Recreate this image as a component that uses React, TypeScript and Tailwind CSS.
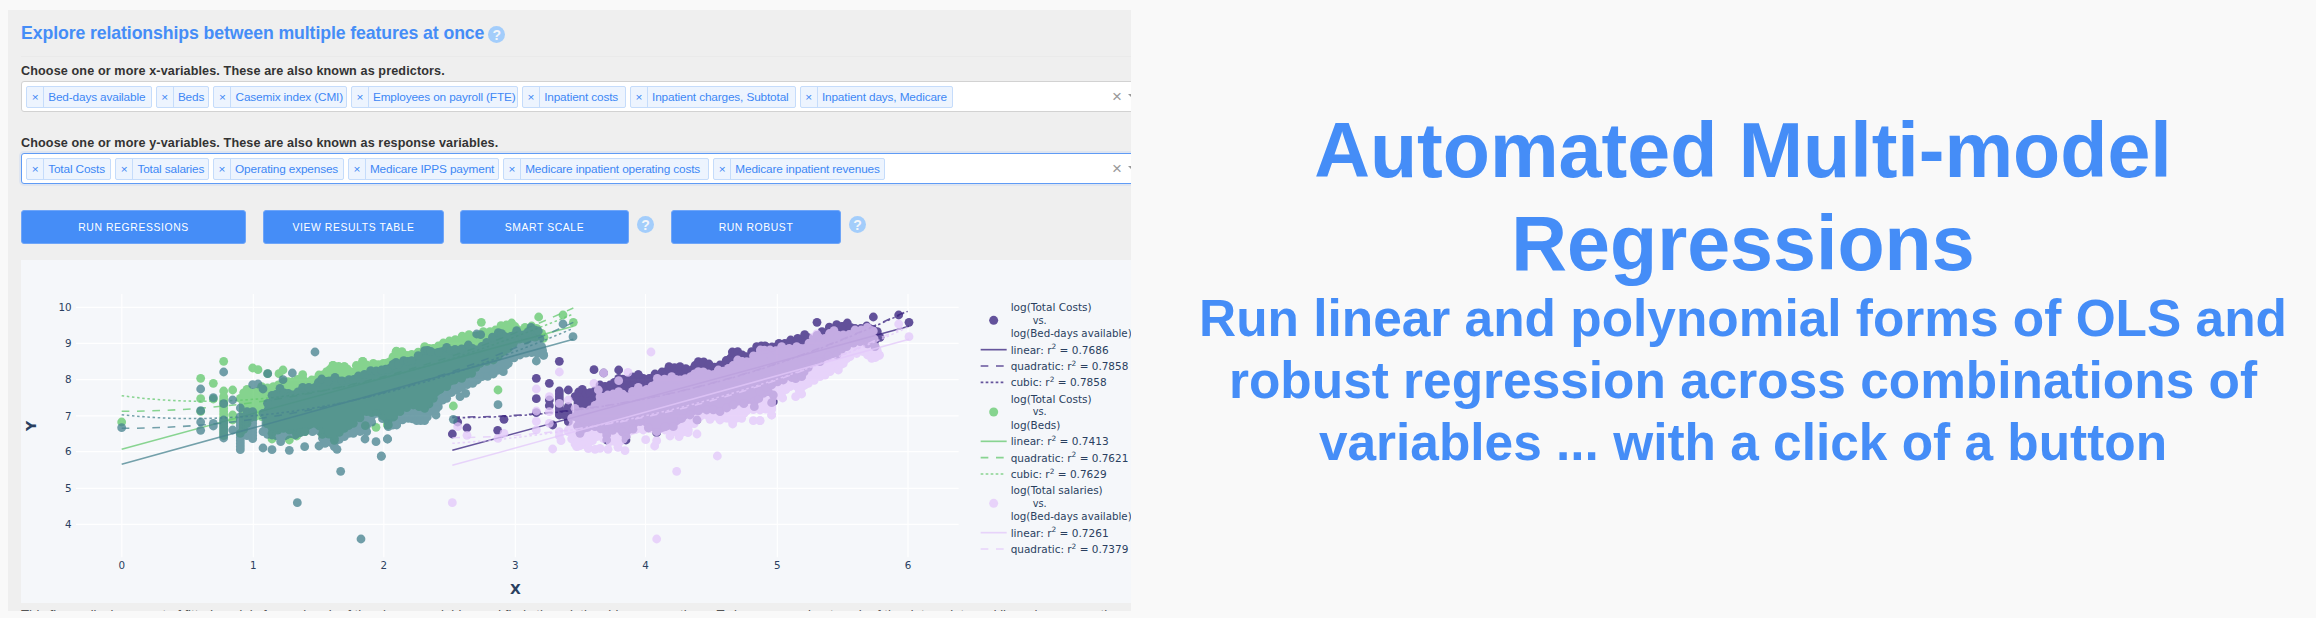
import type { ReactNode } from 'react';

type Pt = [number, number];
type Item = [string, string];

const xVars: Item[] = [
  ['Bed-days available', 'w-[125.5px]'],
  ['Beds', 'w-[53.5px]'],
  ['Casemix index (CMI)', 'w-[133.2px]'],
  ['Employees on payroll (FTE)', 'w-[167px]'],
  ['Inpatient costs', 'w-[103.7px]'],
  ['Inpatient charges, Subtotal', 'w-[165.7px]'],
  ['Inpatient days, Medicare', 'w-[153.7px]'],
];

const yVars: Item[] = [
  ['Total Costs', 'w-[85px]'],
  ['Total salaries', 'w-[93.5px]'],
  ['Operating expenses', 'w-[130.7px]'],
  ['Medicare IPPS payment', 'w-[151px]'],
  ['Medicare inpatient operating costs', 'w-[206px]'],
  ['Medicare inpatient revenues', 'w-[172px]'],
];

function parse(text: string, dx = 0): Pt[] {
  return text
    .trim()
    .split(/\s+/)
    .map((pair) => {
      const [x, y] = pair.split(',').map(Number);
      return [x + dx, y] as Pt;
    });
}

function densify(edge: Pt[], sign: number): Pt[] {
  const out: Pt[] = [];
  edge.forEach((p, i) => {
    out.push(p);
    const next = edge[i + 1];
    if (next) {
      const wobble = (((i * 37) % 13) - 3) * sign;
      out.push([(p[0] + next[0]) / 2, (p[1] + next[1]) / 2 + wobble]);
    }
  });
  return out;
}

function column(x: number, from: number, to: number): Pt[] {
  const out: Pt[] = [];
  for (let y = from; y <= to; y += 9) out.push([x, y]);
  return out;
}

const A = 1140;
const B = 2280;

const green = {
  color: '#64c96e',
  upper: [
    ...parse('721,445 741,418 758,428 785,410 820,410 850,395 878,395 908,385 935,390 957,375 980,365 999,346 1033,350 1050,365 1088,334 1100,345 1120,340 1150,340 1170,335 1188,306'),
    ...parse('50,305 66,305 95,313 134,290 160,295 190,279 226,269 267,254 310,245 330,245 363,227 395,219 415,240 455,228 470,235 485,250 492,262', A),
  ],
  lower: [
    ...parse('721,550 741,520 765,500 785,500 816,550 850,535 886,545 915,545 945,520 970,550 1003,565 1033,535 1060,520 1100,485 1130,485 1165,525'),
    ...parse('22,525 60,485 100,465 134,475 160,445 200,410 245,385 275,370 300,340 340,330 370,305 400,280 440,270 490,265', A),
  ],
  dots: [
    ...parse('365,516 602,385 602,446 602,484 640,400 640,447 671,334 671,423 698,420 698,495 698,510 758,354 774,359 803,371 837,371 849,360 908,374 1128,532 868,570 816,567 967,553 1003,571 1096,527 890,558 999,346 1033,350 1088,334'),
    ...parse('304,217 476,201 549,195 580,217 354,420 220,468 118,465', A),
    ...column(671, 440, 560),
  ],
};

const teal = {
  color: '#488490',
  upper: [
    ...parse('789,490 816,436 840,415 865,430 880,435 908,412 945,412 965,387 1005,382 1047,389 1075,378 1112,362 1145,362 1170,355 1188,337'),
    ...parse('5,360 40,345 71,332 95,332 134,302 152,304 200,292 225,298 265,285 290,300 320,277 355,248 375,260 410,242 432,255 453,232 475,243 485,290 490,315', A),
  ],
  lower: [
    ...parse('789,545 816,555 842,575 860,555 886,555 915,545 960,545 975,580 1003,590 1033,560 1060,550 1100,545 1130,490 1165,520 1190,525'),
    ...parse('25,530 50,522 85,505 110,512 134,512 150,485 175,470 200,445 230,420 245,412 278,398 306,380 340,372 370,365 385,340 420,315 455,308 490,312', A),
  ],
  dots: [
    ...parse('365,533 602,417 602,482 602,516 602,541 640,443 640,520 640,528 671,366 671,461 698,450 698,540 721,474 758,404 774,402 789,417 803,371 849,389 877,369 945,306 789,594 816,599 868,601 914,590 957,588 1011,598 1022,664 892,758 1083,867 1144,619 1163,567 1095,567 1128,575'),
    ...parse('290,252 302,254 549,222 579,260 354,464 220,508 22,567 4,618 168,458 168,478 168,495 257,430 240,440 469,333 491,316 278,400', A),
    ...column(671, 510, 566),
    ...column(721, 500, 600),
    ...column(741, 485, 564),
    ...column(758, 485, 568),
  ],
};

const purple = {
  color: '#361f7d',
  upper: [
    ...parse('585,440 607,418 630,428 660,405 690,405 716,385 740,390 775,375 790,385 825,372 867,350 900,350 935,360 955,335 987,342 1020,345 1057,306 1073,305 1100,320 1130,290 1158,290', A),
    ...parse('15,288 57,280 92,270 134,254 155,270 186,245 230,224 262,219 285,235 320,228 340,240 360,262', B),
  ],
  lower: [
    ...parse('585,500 600,550 645,530 680,555 716,535 738,560 780,515 830,548 880,530 930,495 980,480 1020,485 1060,465 1123,455 1150,430 1180,435', A),
    ...parse('0,425 35,405 70,390 120,375 145,352 180,335 230,315 260,290 300,275 345,290', B),
  ],
  dots: [
    ...parse('217,552 233,516 261,534 353,541 372,508 469,385 469,446 508,400 508,467 469,488 538,334 565,420 642,359 716,360 775,374 518,525 671,369 508,450 738,570 680,570 1123,470 1180,455 951,510', A),
    ...parse('171,217 340,201 416,195 447,217 352,245 35,458 107,386 125,380', B),
    ...column(538 + A, 423, 503),
    ...column(565 + A, 470, 515),
    ...column(551 + A, 485, 500),
  ],
};

const pink = {
  color: '#e3c8fa',
  upper: [
    ...parse('565,540 585,475 630,480 660,440 683,435 716,425 740,440 775,412 800,418 832,385 875,380 900,390 932,380 955,365 985,372 1015,360 1045,355 1073,330 1100,335 1141,300 1165,305', A),
    ...parse('30,300 65,290 110,290 134,295 160,262 195,265 222,242 250,255 285,240 322,232 340,243 345,290 358,315', B),
  ],
  lower: [
    ...parse('565,545 585,582 600,587 625,592 650,560 690,575 720,575 740,556 790,540 830,545 880,545 900,552 925,540 960,500 1020,510 1058,515 1085,505 1100,482 1140,480 1175,475', A),
    ...parse('0,465 35,450 65,438 90,410 125,412 145,400 180,380 210,365 235,360 250,340 270,320 310,305 335,325 358,316', B),
  ],
  dots: [
    ...parse('217,758 813,306 890,664 830,867 1012,618 469,417 469,483 469,514 469,540 508,440 508,485 508,520 538,366 538,460 565,450 538,545 538,558 543,572 518,597 354,565 372,550 261,556 233,530 642,400 671,369 655,420 744,367 716,392 797,569 824,588 830,572 870,558 897,560 951,552 924,548 951,510 1058,522 735,602 684,598 590,590 596,588 625,596 645,598 660,595 714,592 684,565 1120,512 1140,512 1175,495 1175,470', A),
    ...parse('0,512 35,495 35,478 35,458 68,444 107,440 125,432 118,422 416,222 447,260 170,252', B),
  ],
};

type Series = typeof green;

function Cloud({ s }: { s: Series }) {
  const up = densify(s.upper, 1);
  const low = densify(s.lower, -1);
  const outline = [...s.upper, ...s.lower.slice().reverse()].map((p) => p.join(',')).join(' ');
  return (
    <g fill={s.color} opacity={0.766}>
      <polygon points={outline} stroke={s.color} strokeWidth={8} strokeLinejoin="round" />
      {[...up, ...low, ...s.dots].map(([x, y], i) => (
        <circle key={i} cx={x} cy={y} r={13.2} />
      ))}
    </g>
  );
}

function Fits({ color, linear, quad, cubic }: { color: string; linear: string; quad: string; cubic: string }) {
  return (
    <g fill="none" stroke={color} strokeWidth={4.6} opacity={0.75}>
      <path d={linear} />
      <path d={quad} strokeDasharray="23 23" />
      <path d={cubic} strokeDasharray="7.5 8" />
    </g>
  );
}

function Label({ x, y, w, children }: { x: number; y: number; w: number; children: ReactNode }) {
  return (
    <text x={x} y={y} textLength={w} lengthAdjust="spacingAndGlyphs">
      {children}
    </text>
  );
}

const legend = [
  { color: '#361f7d', y: 183, a: 'log(Total Costs)', aw: 243, b: 'log(Bed-days available)', bw: 363, fits: ['0.7686', '0.7858', '0.7858'] },
  { color: '#64c96e', y: 458, a: 'log(Total Costs)', aw: 243, b: 'log(Beds)', bw: 149, fits: ['0.7413', '0.7621', '0.7629'] },
  { color: '#e3c8fa', y: 732, a: 'log(Total salaries)', aw: 276, b: 'log(Bed-days available)', bw: 363, fits: ['0.7261', '0.7379'] },
];

const fitNames = ['linear', 'quadratic', 'cubic'];
const fitWidths = [294, 353, 288];
const fitDashes = [undefined, '23 23', '8 7'];

function Chart() {
  const xs = [365.5, 760, 1151.5, 1546, 1936.5, 2332, 2724];
  const ys = [172, 280, 389, 497.5, 605, 715, 823];
  return (
    <svg
      className="block h-[343px] w-[1110px] shrink-0 bg-[#f5f7fa]"
      viewBox="63 30 3330 1029"
      fontFamily='"DejaVu Sans", Verdana, sans-serif'
      fontSize={31}
      fill="#2a3f5f"
    >
      <g stroke="#ffffff" strokeWidth={3.4}>
        {xs.map((x) => (
          <path key={x} d={`M${x} 132V922`} />
        ))}
        {ys.map((y) => (
          <path key={y} d={`M228 ${y}H2876`} />
        ))}
      </g>
      {xs.map((x, i) => (
        <text key={x} x={x} y={957} textAnchor="middle">
          {i}
        </text>
      ))}
      {ys.map((y, i) => (
        <text key={y} x={215} y={y + 11} textAnchor="end">
          {10 - i}
        </text>
      ))}
      <text x={1546} y={1033} textAnchor="middle" fontSize={42} fontWeight={700}>
        X
      </text>
      <text transform="translate(107 528) rotate(-90)" textAnchor="middle" fontSize={42} fontWeight={700}>
        Y
      </text>

      <Cloud s={purple} />
      <Fits color="#361f7d" linear="M1357 601L2727 229" quad="M1357 501Q2040 505 2723 182" cubic="M1357 503Q2040 505 2723 184" />
      <Cloud s={green} />
      <Fits color="#64c96e" linear="M365 598L1720 229" quad="M365 484Q1042 484 1720 174" cubic="M365 437C817 500 1268 378 1720 192" />
      <Cloud s={pink} />
      <Fits color="#e3c8fa" linear="M1357 646L2727 268" quad="M1357 563Q2040 560 2723 225" cubic="M1357 580C1812 550 2268 440 2723 232" />
      <Cloud s={teal} />
      <Fits color="#488490" linear="M365 643L1720 268" quad="M365 535Q1042 535 1720 217" cubic="M365 494C817 545 1268 425 1720 235" />

      {legend.map((g) => (
        <g key={g.y}>
          <circle cx={2981} cy={g.y + 28} r={13.5} fill={g.color} opacity={0.766} />
          <Label x={3032} y={g.y} w={g.aw}>
            {g.a}
          </Label>
          <Label x={3098} y={g.y + 38} w={42}>
            vs.
          </Label>
          <Label x={3032} y={g.y + 79} w={g.bw}>
            {g.b}
          </Label>
          {g.fits.map((v, i) => (
            <g key={i}>
              <path
                d={`M2942 ${g.y + 116 + i * 49}H${i === 0 ? 3020 : 3012}`}
                stroke={g.color}
                strokeWidth={5}
                strokeDasharray={fitDashes[i]}
                opacity={0.75}
              />
              <Label x={3032} y={g.y + 128 + i * 49} w={fitWidths[i]}>
                {fitNames[i]}: r
                <tspan dy={-13} fontSize={22}>
                  2
                </tspan>
                <tspan dy={13}> = {v}</tspan>
              </Label>
            </g>
          ))}
        </g>
      ))}
    </svg>
  );
}

function Help() {
  return (
    <span className="flex h-[17px] w-[17px] shrink-0 items-center justify-center rounded-full bg-[#a3cdfb] text-[14px] leading-none font-bold text-[#f3f6fa]">
      ?
    </span>
  );
}

function Select({ items, focused }: { items: Item[]; focused?: boolean }) {
  return (
    <div
      className={
        focused
          ? 'flex h-[31px] w-[1140px] shrink-0 items-center gap-[4.2px] rounded-[3px] border border-[#5f9bf5] bg-white pl-1 shadow-[0_0_0_2px_#dfe5f0]'
          : 'flex h-[31px] w-[1140px] shrink-0 items-center gap-[4.2px] rounded-[3px] border border-[#d2d2d2] bg-white pl-1'
      }
    >
      {items.map(([item, width]) => (
        <span
          key={item}
          className={`${width} flex h-[22px] shrink-0 items-stretch rounded-[2px] border border-[#c5dcfb] bg-[#edf4fe] text-[11.8px] leading-[20px] tracking-[-0.14px] whitespace-nowrap text-[#3d87f5]`}
        >
          <span className="w-[17px] shrink-0 border-r border-[#c5dcfb] text-center">×</span>
          <span className="pl-[4.2px]">{item}</span>
        </span>
      ))}
      <span className="mr-[22px] ml-auto flex items-center gap-[6px] text-[17px] leading-none text-[#999]">
        <span className="pb-px">×</span>
        <span className="h-0 w-0 border-x-[5px] border-t-[5px] border-x-transparent border-t-[#999]" />
      </span>
    </div>
  );
}

function Button({ className, children }: { className: string; children: ReactNode }) {
  return (
    <button
      className={`${className} flex h-[34px] shrink-0 items-center justify-center rounded-[3px] border border-[#6ea5f8] bg-[#458df7] pt-px text-[10.4px] tracking-[0.6px] text-white`}
    >
      {children}
    </button>
  );
}

export default function App() {
  return (
    <div className="flex h-[618px] w-[2316px] overflow-hidden bg-[#f9f9f9] font-['Liberation_Sans',Arial,sans-serif]">
      <section className="mt-[10px] ml-2 flex h-[601px] w-[1123px] shrink-0 flex-col overflow-hidden bg-[#efefef] pl-[13px]">
        <div className="flex h-[47px] w-[1140px] shrink-0 gap-1 border-b border-[#eaeaea] pt-4">
          <h2 className="-mt-[3px] h-5 text-[17.7px] leading-[20px] font-bold tracking-[-0.1px] whitespace-nowrap text-[#458df7]">
            Explore relationships between multiple features at once
          </h2>
          <Help />
        </div>
        <p className="mt-[6px] h-[18px] shrink-0 text-[12.6px] leading-[16px] font-bold tracking-[0.12px] text-[#333]">
          Choose one or more x-variables. These are also known as predictors.
        </p>
        <Select items={xVars} />
        <p className="mt-[23px] h-[18px] shrink-0 text-[12.6px] leading-[16px] font-bold tracking-[0.12px] text-[#333]">
          Choose one or more y-variables. These are also known as response variables.
        </p>
        <Select items={yVars} focused />
        <div className="mt-[26px] flex h-[34px] shrink-0">
          <Button className="w-[225px]">RUN REGRESSIONS</Button>
          <Button className="ml-[17px] w-[181px]">VIEW RESULTS TABLE</Button>
          <Button className="ml-[16px] w-[169px]">SMART SCALE</Button>
          <div className="mt-1.5 ml-2 w-[34px]">
            <Help />
          </div>
          <Button className="w-[170px]">RUN ROBUST</Button>
          <div className="mt-1.5 ml-2">
            <Help />
          </div>
        </div>
        <div className="mt-[16px] flex shrink-0">
          <Chart />
        </div>
        <p className="mt-[5px] h-[14px] shrink-0 text-[13.2px] leading-[14px] whitespace-nowrap text-[#555]">
          This figure displays a set of fitted models for each pair of the chosen variables and finds the relationships among
          them. To learn more about each of the data points and lines, hover over them with the cursor or read on.
        </p>
      </section>
      <section className="-mr-[2px] ml-auto flex w-[1150px] shrink-0 flex-col pt-[104px] text-center font-bold text-[#458df7]">
        <h1 className="text-[77.2px] leading-[92.6px]">
          Automated Multi-model
          <br />
          Regressions
        </h1>
        <h2 className="-mt-px text-[51.4px] leading-[61.7px] whitespace-nowrap">
          Run linear and polynomial forms of OLS and
          <br />
          robust regression across combinations of
          <br />
          variables ... with a click of a button
        </h2>
      </section>
    </div>
  );
}
